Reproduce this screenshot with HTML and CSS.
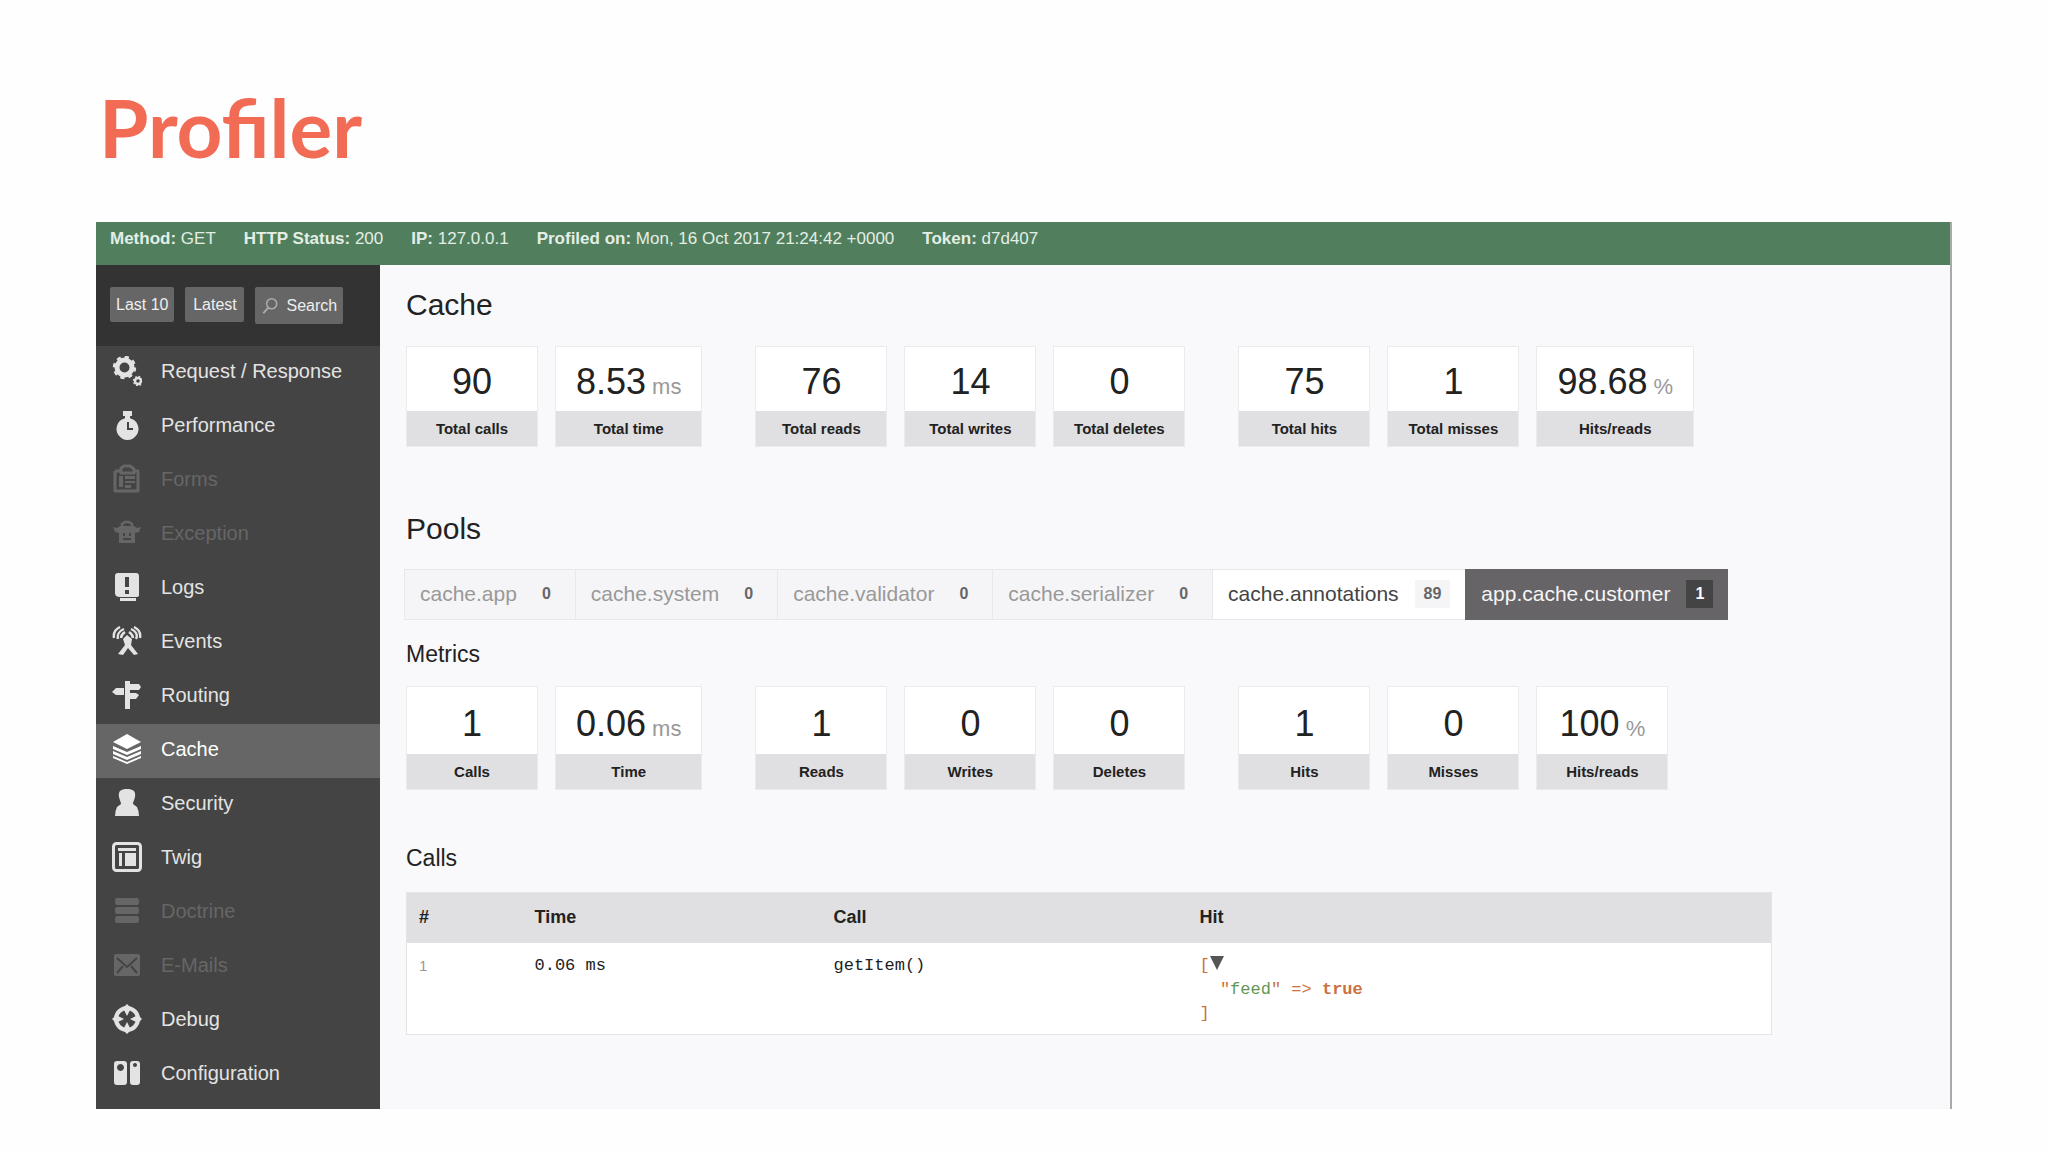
FILE: index.html
```html
<!DOCTYPE html>
<html lang="en">
<head>
<meta charset="utf-8">
<title>Profiler</title>
<meta name="viewport" content="width=device-width, initial-scale=1">
<link rel="stylesheet" href="styles.css">
</head>
<body>
<h1 class="title">Profiler</h1>
<div class="profiler">
  <header class="summary">
    <span><b>Method:</b> GET</span>
    <span><b>HTTP Status:</b> 200</span>
    <span><b>IP:</b> 127.0.0.1</span>
    <span><b>Profiled on:</b> Mon, 16 Oct 2017 21:24:42 +0000</span>
    <span><b>Token:</b> d7d407</span>
  </header>
  <div class="columns">
    <aside class="sidebar">
      <div class="shortcuts">
        <button class="btn" type="button">Last 10</button>
        <button class="btn" type="button">Latest</button>
        <button class="btn btn-search" type="button"><svg class="search-icon" viewBox="0 0 16 16" aria-hidden="true"><circle cx="9.5" cy="6" r="4.5" fill="none" stroke="currentColor" stroke-width="1.4"/><path d="M6.5 9.5 2 14.5" stroke="currentColor" stroke-width="1.8"/></svg>Search</button>
      </div>
      <nav class="menu">
        <a class="item" href="#request"><svg class="icon" viewBox="0 0 30 30" aria-hidden="true"><circle cx="12.500" cy="11.500" r="7.500" fill="none" stroke="currentColor" stroke-width="5"/><circle cx="12.500" cy="11.500" r="10.500" fill="none" stroke="currentColor" stroke-width="2.400" stroke-dasharray="4.120 4.120"/><circle cx="26" cy="25" r="3" fill="none" stroke="currentColor" stroke-width="2.400"/><circle cx="26" cy="25" r="4.600" fill="none" stroke="currentColor" stroke-width="1.200" stroke-dasharray="1.800 1.800"/></svg>Request / Response</a>
        <a class="item" href="#performance"><svg class="icon" viewBox="0 0 30 30" aria-hidden="true"><path fill="currentColor" fill-rule="evenodd" d="M11 1h9v5h-2v2.200A11 11 0 1 1 13 8.200V6h-2ZM15 12v8h6v-2h-4v-6Z"/></svg>Performance</a>
        <a class="item is-disabled" href="#forms"><svg class="icon" viewBox="0 0 30 30" aria-hidden="true"><path fill="none" stroke="currentColor" stroke-width="3" stroke-linejoin="round" d="M3 7h5M3 7v20h23V7h-4M9 8V4l3-2h6l4 3v4H9Z"/><path fill="currentColor" d="M7 12h4v11H7zM13 12h10v3H13zM13 17h10v2H13zM13 21h6v3h-6z"/></svg>Forms</a>
        <a class="item is-disabled" href="#exception"><svg class="icon" viewBox="0 0 30 30" aria-hidden="true"><path fill="none" stroke="currentColor" stroke-width="2.500" d="M10 9V6l3-2h4l3 2v3"/><path fill="currentColor" fill-rule="evenodd" d="m1 9 4 1 3-2h14l3 2 4-1-2 5-4 1v10H7V15l-4-1ZM11 15v3h2v-3ZM17 15v3h2v-3ZM11 20v2h8v-2Z"/></svg>Exception</a>
        <a class="item" href="#logs"><svg class="icon" viewBox="0 0 30 30" aria-hidden="true"><path fill="currentColor" fill-rule="evenodd" d="M6 1h18q3 0 3 3v19q0 2-3 2v4H8v-4q-5 0-5-4V4q0-3 3-3ZM13 5v10h4V5ZM13 18v4h4v-4ZM8 25v1h16v-1Z"/></svg>Logs</a>
        <a class="item" href="#events"><svg class="icon" viewBox="0 0 30 30" aria-hidden="true"><path fill="currentColor" d="m15 9 5 4-1 6 7 9-4 1-6-7-5 7-5-1 7-9-2-6Z"/><path fill="none" stroke="currentColor" stroke-width="2.400" d="M6 13C5 9 7 5 12 3M24 13c2-4 0-8-5-10M2 12C1 7 4 3 8 1M28 12c1-5-2-9-6-11M9 12c0-3 1-4 4-6M21 12c0-3-1-4-4-6"/></svg>Events</a>
        <a class="item" href="#routing"><svg class="icon" viewBox="0 0 30 30" aria-hidden="true"><path fill="currentColor" d="M13 1h5v28h-5zM18 4h9l2 3-2 3h-9zM18 13h6l3 2-3 4h-6zM12 8v7H4l-4-3 4-4z"/></svg>Routing</a>
        <a class="item is-active" href="#cache" aria-current="page"><svg class="icon" viewBox="0 0 30 30" aria-hidden="true"><path fill="currentColor" d="M15 0 29 8 15 15 1 8ZM1 12l14 6 14-6v3l-14 6-14-6ZM1 17l14 6 14-6v3l-14 6-14-6ZM1 22l14 6 14-6v2l-14 6-14-6Z"/></svg>Cache</a>
        <a class="item" href="#security"><svg class="icon" viewBox="0 0 30 30" aria-hidden="true"><path fill="currentColor" d="M15 1c6 0 9 2 8 8-1 4-2 5-2 7l4 3q2 4 2 9H3q0-5 2-9l4-3c0-2-1-3-2-7-1-6 2-8 8-8Z"/></svg>Security</a>
        <a class="item" href="#twig"><svg class="icon" viewBox="0 0 30 30" aria-hidden="true"><rect x="1.500" y="1.500" width="27" height="27" rx="3" fill="none" stroke="currentColor" stroke-width="3"/><path fill="currentColor" d="M6 6h18v3H6zM7 11h3v13H7zM13 11h11v13H13z"/></svg>Twig</a>
        <a class="item is-disabled" href="#doctrine"><svg class="icon" viewBox="0 0 30 30" aria-hidden="true"><path fill="currentColor" d="M5 2h20q2 0 2 3.500t-2 3.500H5q-2 0-2-3.500t2-3.500ZM5 11h20q2 0 2 3.500t-2 3.500H5q-2 0-2-3.500t2-3.500ZM5 20h20q2 0 2 3.500t-2 3.500H5q-2 0-2-3.500t2-3.500Z"/></svg>Doctrine</a>
        <a class="item is-disabled" href="#emails"><svg class="icon" viewBox="0 0 30 30" aria-hidden="true"><rect x="2" y="4" width="26" height="22" rx="2" fill="currentColor"/><path fill="none" stroke="#444" stroke-width="2" d="m5 8 10 9L25 8M5 23l6-7M25 23l-6-7"/></svg>E-Mails</a>
        <a class="item" href="#debug"><svg class="icon" viewBox="0 0 30 30" aria-hidden="true"><circle cx="15" cy="15" r="11" fill="none" stroke="currentColor" stroke-width="4"/><path fill="currentColor" d="m15 0 4 4h-8ZM15 30l4-4h-8ZM0 15l4-4v8ZM30 15l-4-4v8ZM11 4h8l-4 8ZM11 26h8l-4-8ZM4 11v8l8-4ZM26 11v8l-8-4Z"/></svg>Debug</a>
        <a class="item" href="#configuration"><svg class="icon" viewBox="0 0 30 30" aria-hidden="true"><path fill="currentColor" fill-rule="evenodd" d="M5 3h7q3 0 3 3v18q0 3-3 3H5q-3 0-3-3V6q0-3 3-3ZM8.500 6a3.500 3.500 0 1 0 .010 0ZM21 3h4q3 0 3 3v18q0 3-3 3h-4q-3 0-3-3V6q0-3 3-3ZM23 5a2 2 0 1 0 .010 0Z"/></svg>Configuration</a>
      </nav>
    </aside>
    <main class="content">
      <h2 class="heading">Cache</h2>
      <div class="metrics">
        <div class="group">
          <div class="metric"><span class="value">90</span><span class="label">Total calls</span></div>
          <div class="metric"><span class="value">8.53 <small class="unit">ms</small></span><span class="label">Total time</span></div>
        </div>
        <div class="group">
          <div class="metric"><span class="value">76</span><span class="label">Total reads</span></div>
          <div class="metric"><span class="value">14</span><span class="label">Total writes</span></div>
          <div class="metric"><span class="value">0</span><span class="label">Total deletes</span></div>
        </div>
        <div class="group">
          <div class="metric"><span class="value">75</span><span class="label">Total hits</span></div>
          <div class="metric"><span class="value">1</span><span class="label">Total misses</span></div>
          <div class="metric"><span class="value">98.68 <small class="unit">%</small></span><span class="label">Hits/reads</span></div>
        </div>
      </div>
      <h2 class="heading heading-pools">Pools</h2>
      <div class="tabs" role="tablist">
        <button class="tab is-empty" type="button" role="tab">cache.app<span class="badge">0</span></button>
        <button class="tab is-empty" type="button" role="tab">cache.system<span class="badge">0</span></button>
        <button class="tab is-empty" type="button" role="tab">cache.validator<span class="badge">0</span></button>
        <button class="tab is-empty" type="button" role="tab">cache.serializer<span class="badge">0</span></button>
        <button class="tab" type="button" role="tab">cache.annotations<span class="badge">89</span></button>
        <button class="tab is-selected" type="button" role="tab" aria-selected="true">app.cache.customer<span class="badge">1</span></button>
      </div>
      <h3 class="subheading">Metrics</h3>
      <div class="metrics metrics-pool">
        <div class="group">
          <div class="metric"><span class="value">1</span><span class="label">Calls</span></div>
          <div class="metric"><span class="value">0.06 <small class="unit">ms</small></span><span class="label">Time</span></div>
        </div>
        <div class="group">
          <div class="metric"><span class="value">1</span><span class="label">Reads</span></div>
          <div class="metric"><span class="value">0</span><span class="label">Writes</span></div>
          <div class="metric"><span class="value">0</span><span class="label">Deletes</span></div>
        </div>
        <div class="group">
          <div class="metric"><span class="value">1</span><span class="label">Hits</span></div>
          <div class="metric"><span class="value">0</span><span class="label">Misses</span></div>
          <div class="metric"><span class="value">100 <small class="unit">%</small></span><span class="label">Hits/reads</span></div>
        </div>
      </div>
      <h3 class="subheading subheading-calls">Calls</h3>
      <table class="calls">
        <thead>
          <tr><th class="col-num">#</th><th class="col-time">Time</th><th class="col-call">Call</th><th>Hit</th></tr>
        </thead>
        <tbody>
          <tr>
            <td class="num">1</td>
            <td>0.06 ms</td>
            <td>getItem()</td>
            <td><div class="dump"><span class="punct">[</span><svg class="toggle" viewBox="0 0 14 14" aria-hidden="true"><path fill="currentColor" d="M0 0h14L7 14Z"/></svg>
  <span class="punct">"</span><span class="str">feed</span><span class="punct">"</span> <span class="punct">=&gt;</span> <b class="punct">true</b>
<span class="punct">]</span></div></td>
          </tr>
        </tbody>
      </table>
    </main>
  </div>
</div>
</body>
</html>
```
FILE: styles.css
```css
* {
  box-sizing: border-box;
}

body {
  margin: 0;
  min-height: 100vh;
  padding: 76px 96px 43px;
  display: flex;
  flex-direction: column;
  background: #fefefe;
  color: #222;
  font-family: "Liberation Sans", Arial, sans-serif;
}

h1, h2, h3 {
  margin: 0;
  font-weight: 400;
}

.title {
  height: 146px;
  padding-left: 3px;
  color: #f26b55;
  font: 700 80px/102px Lato, sans-serif;
}

.profiler {
  flex: 1;
  display: flex;
  flex-direction: column;
  border-right: 2px solid #a9a9a9;
  background: #f9f8fa;
}

.summary {
  display: flex;
  flex-wrap: wrap;
  gap: 0 28px;
  padding: 5px 14px 14px;
  background: #517f5e;
  color: #e3eee5;
  font-size: 17px;
  line-height: 24px;
}

.columns {
  flex: 1;
  display: flex;
}

.sidebar {
  flex: 0 0 284px;
  background: #444;
  color: #e3e3e3;
}

.shortcuts {
  display: flex;
  align-items: flex-start;
  gap: 11px;
  height: 81px;
  padding: 22px 14px;
  background: #333;
}

.btn {
  display: flex;
  align-items: center;
  justify-content: center;
  min-width: 59px;
  height: 35px;
  padding: 0 6px;
  border: 0;
  border-radius: 2px;
  background: #666;
  color: #eee;
  font: 16px/24px "Liberation Sans", Arial, sans-serif;
}

.btn-search {
  gap: 7px;
  height: 37px;
}

.search-icon {
  width: 18px;
  height: 18px;
  color: #aaa;
}

.item {
  display: flex;
  align-items: center;
  gap: 19px;
  height: 54px;
  padding: 0 16px 4px;
  color: inherit;
  font-size: 20px;
  text-decoration: none;
}

.item.is-disabled {
  color: #666;
}

.item.is-active {
  background: #666;
  color: #fff;
}

.icon {
  width: 30px;
  height: 30px;
}

.content {
  flex: 1;
  min-width: 0;
  padding: 20px 26px;
}

.heading {
  font-size: 30px;
  line-height: 40px;
}

.heading-pools {
  margin-top: 62px;
}

.metrics {
  display: flex;
  gap: 53px;
  margin-top: 21px;
}

.group {
  display: flex;
  gap: 17px;
}

.metric {
  display: flex;
  flex-direction: column;
  min-width: 132px;
  background: #e0dfe1;
  border: 1px solid #ebeaec;
  text-align: center;
}

.value {
  padding: 6px 20px 0;
  background: #fff;
  font-size: 36px;
  line-height: 58px;
  white-space: nowrap;
}

.unit {
  margin-left: -4px;
  color: #999;
  font-size: 22px;
  line-height: 22px;
}

.label {
  font-size: 15px;
  font-weight: 700;
  line-height: 35px;
}

.metrics-pool {
  margin-top: 18px;
}

.metrics-pool .value {
  line-height: 61px;
}

.tabs {
  display: flex;
  height: 51px;
  margin: 20px 0 0 -2px;
}

.tab {
  display: flex;
  align-items: center;
  gap: 16px;
  padding: 0 15px 2px;
  border: 1px solid #e8e7e9;
  border-right: 0;
  background: #fff;
  color: #444;
  font: 21px/24px "Liberation Sans", Arial, sans-serif;
}

.tab.is-empty {
  background: #f5f4f6;
  color: #999;
}

.tab.is-selected {
  border-color: #666466;
  background: #666466;
  color: #f5f5f5;
}

.badge {
  padding: 2px 9px;
  background: #f5f4f6;
  color: #666;
  font-size: 16px;
  font-weight: 700;
}

.is-selected .badge {
  background: #444;
  color: #fff;
}

.subheading {
  margin-top: 20px;
  font-size: 23px;
  line-height: 28px;
}

.subheading-calls {
  margin-top: 54px;
}

.calls {
  width: 90%;
  margin-top: 20px;
  border: 1px solid #e5e4e6;
  border-collapse: collapse;
  table-layout: fixed;
  background: #fff;
}

.calls th {
  height: 50px;
  padding: 0 12px;
  background: #e0dfe1;
  font-size: 18px;
  text-align: left;
}

.calls td {
  height: 92px;
  padding: 11px 12px 8px;
  font: 17px/24px "Liberation Mono", monospace;
  vertical-align: top;
}

.col-num {
  width: 116px;
}

.col-time {
  width: 299px;
}

.col-call {
  width: 366px;
}

.calls .num {
  color: #999;
  font: 15px/24px "Liberation Sans", Arial, sans-serif;
}

.dump {
  white-space: pre;
}

.toggle {
  width: 14px;
  height: 14px;
  color: #555;
}

.punct {
  color: #cc7040;
}

.str {
  color: #629755;
}
```
